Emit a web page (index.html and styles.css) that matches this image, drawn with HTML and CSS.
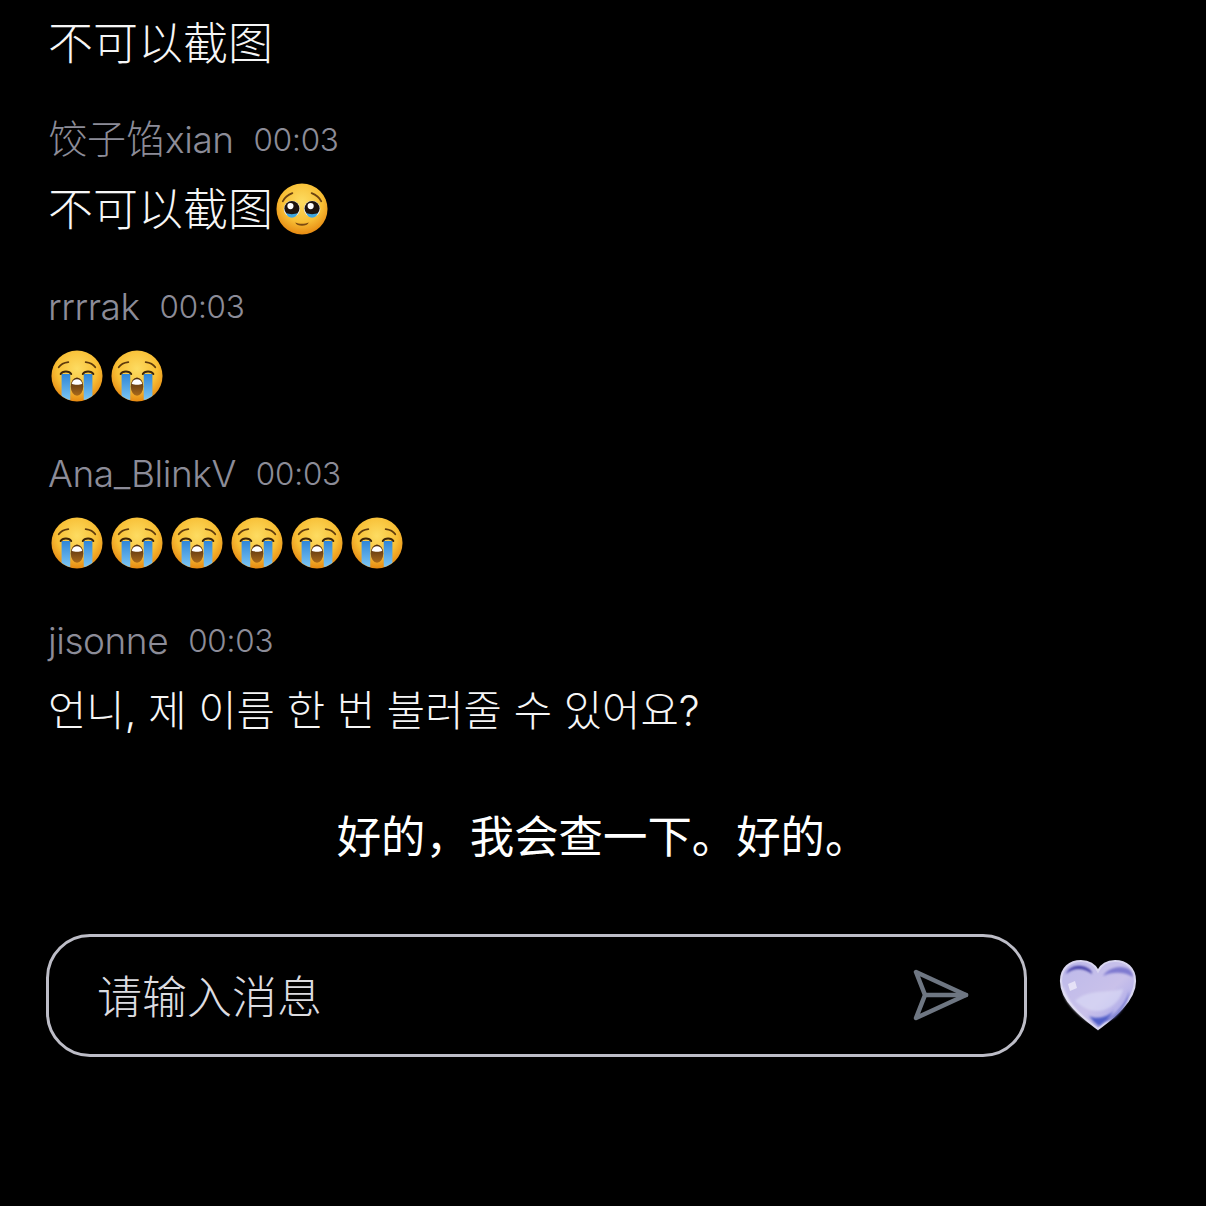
FILE: index.html
```html
<!DOCTYPE html>
<html lang="zh">
<head>
  <meta charset="UTF-8">
  <meta name="viewport" content="width=device-width, initial-scale=1.0">
  <title>Live chat</title>
  <link rel="stylesheet" href="styles.css">
</head>
<body>
  <svg class="defs" width="0" height="0" aria-hidden="true">
    <defs>
      <radialGradient id="face" cx="50%" cy="36%" r="66%">
        <stop offset="0" stop-color="#fddc62"/>
        <stop offset="0.6" stop-color="#f8bf35"/>
        <stop offset="1" stop-color="#e5850f"/>
      </radialGradient>
      <linearGradient id="tear" x1="0" y1="0" x2="0" y2="1">
        <stop offset="0" stop-color="#2f86d8"/>
        <stop offset="1" stop-color="#7cc6f2"/>
      </linearGradient>
      <linearGradient id="mouth" x1="0" y1="0" x2="0" y2="1">
        <stop offset="0" stop-color="#4a2a0d"/>
        <stop offset="1" stop-color="#a9691a"/>
      </linearGradient>
      <linearGradient id="glass" x1="0" y1="0" x2="1" y2="1">
        <stop offset="0" stop-color="#bdb9ea"/>
        <stop offset="0.55" stop-color="#c9c1ea"/>
        <stop offset="1" stop-color="#9a9be8"/>
      </linearGradient>
      <filter id="soft" x="-20%" y="-20%" width="140%" height="140%">
        <feGaussianBlur stdDeviation="0.8"/>
      </filter>
      <symbol id="cry" viewBox="0 0 54 54">
        <circle cx="27" cy="27" r="26.5" fill="url(#face)"/>
        <path d="M11 25h9v27c-3-.8-6-2.200-9-4.500z" fill="url(#tear)"/>
        <path d="M34 25h9v22.500c-3 2.300-6 3.700-9 4.500z" fill="url(#tear)"/>
        <path d="M10 25c2-3.500 9-3.500 11 0M33 25c2-3.500 9-3.500 11 0" fill="none" stroke="#3e2608" stroke-width="2" stroke-linecap="round"/>
        <path d="M8 18c2-3 6-5 10-5.500M46 18c-2-3-6-5-10-5.500" fill="none" stroke="#5e3a0c" stroke-width="1.800" stroke-linecap="round"/>
        <ellipse cx="27" cy="38" rx="6.500" ry="9.500" fill="url(#mouth)"/>
        <path d="M21.500 35c1.300-6 9.700-6 11 0-3 1.300-8 1.300-11 0z" fill="#fff"/>
      </symbol>
      <symbol id="plead" viewBox="0 0 54 54">
        <circle cx="27" cy="27" r="26.5" fill="url(#face)"/>
        <path d="M7 19c2-4 6-7 10-8.500M47 19c-2-4-6-7-10-8.500" fill="none" stroke="#6b4210" stroke-width="1.800" stroke-linecap="round"/>
        <circle cx="16.500" cy="27" r="8.500" fill="#e8eef2"/>
        <circle cx="37.500" cy="27" r="8.500" fill="#e8eef2"/>
        <circle cx="16.500" cy="26.500" r="7.800" fill="#1d130e"/>
        <circle cx="37.500" cy="26.500" r="7.800" fill="#1d130e"/>
        <circle cx="15" cy="24" r="3.200" fill="#fff"/>
        <circle cx="36" cy="24" r="3.200" fill="#fff"/>
        <path d="M10.500 31c3 2 9 2 12 0-1 3.500-3 5-6 5s-5-1.500-6-5zM31.500 31c3 2 9 2 12 0-1 3.500-3 5-6 5s-5-1.500-6-5z" fill="#3fa7e0"/>
        <path d="M20 41c4 1.800 10 1.800 14 0-1.500 4.500-12.500 4.500-14 0z" fill="#7a4a12"/>
      </symbol>
    </defs>
  </svg>

  <main class="chat">
    <ul class="messages">
      <li class="message">
        <p class="text">不可以截图</p>
      </li>
      <li class="message">
        <p class="meta"><span class="name"><span class="cjk">饺子馅</span>xian</span><span class="time">00:03</span></p>
        <p class="text">不可以截图<svg class="emoji"><use href="#plead"/></svg></p>
      </li>
      <li class="message">
        <p class="meta"><span class="name">rrrrak</span><span class="time">00:03</span></p>
        <p class="text">
          <svg class="emoji"><use href="#cry"/></svg><svg class="emoji"><use href="#cry"/></svg>
        </p>
      </li>
      <li class="message">
        <p class="meta"><span class="name">Ana_BlinkV</span><span class="time">00:03</span></p>
        <p class="text">
          <svg class="emoji"><use href="#cry"/></svg><svg class="emoji"><use href="#cry"/></svg><svg class="emoji"><use href="#cry"/></svg><svg class="emoji"><use href="#cry"/></svg><svg class="emoji"><use href="#cry"/></svg><svg class="emoji"><use href="#cry"/></svg>
        </p>
      </li>
      <li class="message">
        <p class="meta"><span class="name">jisonne</span><span class="time">00:03</span></p>
        <p class="text korean">언니, 제 이름 한 번 불러줄 수 있어요?</p>
      </li>
    </ul>

    <p class="caption">好的，我会查一下。好的。</p>

    <div class="composer">
      <form class="input-box">
        <span class="placeholder">请输入消息</span>
        <svg class="send" viewBox="0 0 56 52" fill="none" stroke="#6e7682" stroke-width="4.5" stroke-linejoin="round" stroke-linecap="round">
          <path d="M3 3 L53 26 L3 49 L12 26 Z"/>
          <path d="M12 26 H53"/>
        </svg>
      </form>
      <svg class="heart" viewBox="0 0 78 72">
        <path d="M39 70C30 63 2 44 2 22 2 9 11 2 22 2c8 0 14 4 17 10C42 6 48 2 56 2c11 0 20 7 20 20 0 22-28 41-37 48z" fill="url(#glass)" stroke="#d9d6f0" stroke-width="2.200"/>
        <g filter="url(#soft)">
          <path d="M7 15c3-8 14-11 23-5 2 1 3 3 3 5-8-6-18-7-26 0z" fill="#4541a8"/>
          <path d="M44 17c5-8 18-12 27-6 2 2 3 5 3 7-8-5-20-6-30-1z" fill="#7f7ad0"/>
          <path d="M70 32c-3 14-15 26-26 31 8-1 14-5 20-14 4-6 6-11 6-17z" fill="#6468c8"/>
          <path d="M30 57c8 4 20 1 25-6-4 8-11 13-15 16-4-3-7-6-10-10z" fill="#515ec8"/>
          <path d="M16 42c12-12 32-8 48-12-2 12-14 22-26 22-8 0-15-4-22-10z" fill="#dfe0f8" opacity="0.55"/>
          <path d="M4 26c3 14 14 28 28 38-6-2-22-16-26-26-2-4-2-8-2-12z" fill="#e6e3f6"/>
        </g>
        <path d="M9 25l7-3 2 7-7 3z" fill="#f0eefb" opacity="0.75"/>
      </svg>
    </div>
  </main>
</body>
</html>
```

FILE: styles.css
```css
body {
  margin: 0;
  padding: 0;
  background-color: #000;
  color: #fff;
  font-family: Inter, "Noto Sans CJK SC", sans-serif;
}
p {
  margin: 0;
}
.defs {
  position: absolute;
}
.chat {
  height: 1206px;
  overflow: hidden;
  box-sizing: border-box;
  padding-top: 9px;
}
.messages {
  list-style: none;
  margin: 0;
  padding: 0 48px;
}
.message {
  margin-bottom: 31px;
}
.message:first-child {
  margin-bottom: 30px;
}
.message:last-child {
  margin-bottom: 0;
}
.meta {
  height: 68px;
  box-sizing: border-box;
  padding-bottom: 2px;
  display: flex;
  align-items: center;
  gap: 20px;
  color: #8c8c98;
  font-weight: 300;
}
.name {
  font-size: 37px;
  line-height: 44px;
  letter-spacing: -0.45px;
}
.cjk {
  font-size: 39px;
  line-height: 1;
  letter-spacing: 0;
}
.time {
  font-size: 31.4px;
  letter-spacing: -0.2px;
}
.text {
  display: flex;
  align-items: center;
  height: 68px;
  box-sizing: border-box;
  padding-bottom: 5px;
  font-size: 45px;
  font-weight: 300;
  white-space: nowrap;
  color: #f6f6f6;
}
.korean {
  font-size: 41.7px;
}
.emoji {
  width: 52px;
  height: 52px;
  margin: 5px 8px 0 3px;
}
.emoji + .emoji {
  margin-left: 0;
}
.caption {
  margin-top: 59px;
  text-align: center;
  font-size: 44.4px;
  font-weight: 400;
  line-height: 68px;
}
.composer {
  margin: 63px 0 0 46px;
  display: flex;
  align-items: center;
  gap: 32px;
}
.input-box {
  width: 981px;
  height: 123px;
  box-sizing: border-box;
  border: 3px solid #bdbdc7;
  border-radius: 44px;
  padding: 0 55px 2px 48px;
  display: flex;
  align-items: center;
  justify-content: space-between;
}
.placeholder {
  font-size: 45px;
  font-weight: 300;
  color: #dcdce0;
}
.send {
  width: 56px;
  height: 52px;
}
.heart {
  width: 78px;
  height: 72px;
  margin-top: -2px;
}
```
